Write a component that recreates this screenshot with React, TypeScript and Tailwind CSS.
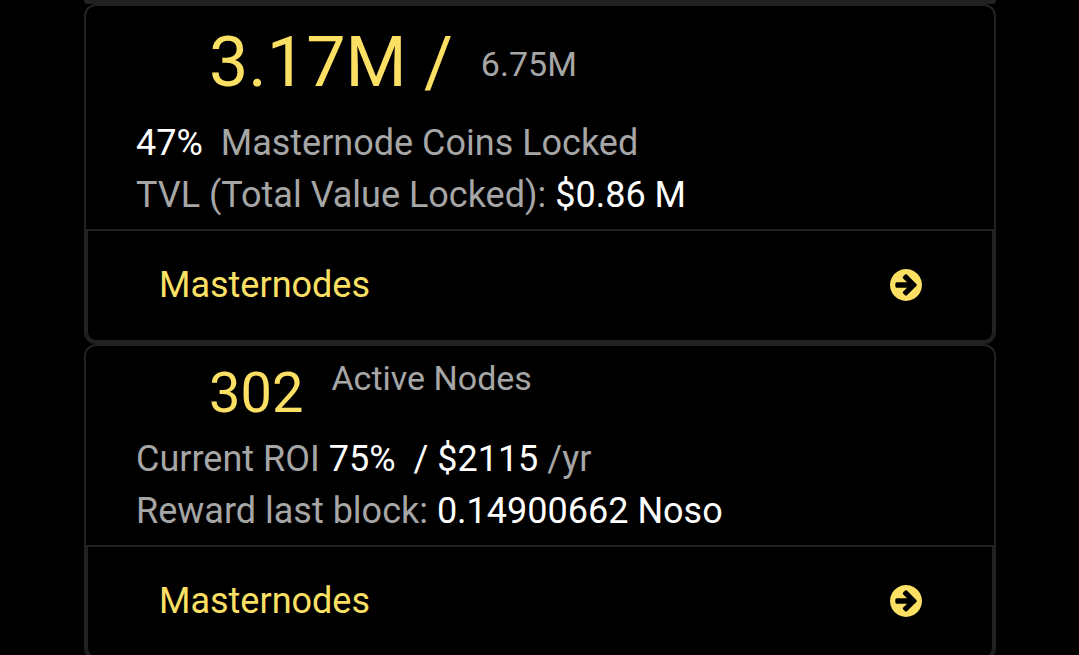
import type { ReactNode } from 'react';

interface StatCardProps {
  header: ReactNode;
  children: ReactNode;
}

function ArrowCircleIcon() {
  return (
    <svg viewBox="0 0 1536 1536" className="size-8 fill-current" aria-hidden="true">
      <path d="M1285 767q0-27-18-45l-91-91-362-362q-18-18-45-18t-45 18l-91 91q-18 18-18 45t18 45l189 189h-502q-26 0-45 19t-19 45v128q0 26 19 45t45 19h502l-189 189q-19 19-19 45t19 45l91 91q18 18 45 18t45-18l362-362 91-91q18-18 18-45zM1536 768q0 209-103 385.5t-279.5 279.5-385.5 103-385.5-103-279.5-279.5-103-385.5 103-385.5 279.5-279.5 385.5-103 385.5 103 279.5 279.5 103 385.5z" />
    </svg>
  );
}

// Stat panel: big figure, two detail lines and a link strip at the bottom.
function StatCard({ header, children }: StatCardProps) {
  return (
    <section className="rounded-[12px] border-2 border-[#222222]">
      {header}
      <div className="px-[50px] pb-2 text-[36px] leading-[52px] text-[#a6a6a6]">
        {children}
      </div>
      <a
        href="#masternodes"
        className="flex h-[113px] items-center justify-between rounded-b-[10px] border-2 border-[#222222] pr-[70px] pb-[2px] pl-[71px] text-[36px] text-[#fce063]"
      >
        Masternodes
        <ArrowCircleIcon />
      </a>
    </section>
  );
}

function Value({ children }: { children: ReactNode }) {
  return <span className="whitespace-pre text-white">{children}</span>;
}

export default function App() {
  return (
    <main className="h-screen overflow-hidden bg-black pr-[83px] pl-[84px] font-[Roboto,sans-serif]">
      {/* bottom edge of the panel above */}
      <div className="h-1 rounded-b-xl bg-[#222222]" />

      <StatCard
        header={
          <header className="flex h-[111px] items-center gap-7 pl-[123px]">
            <h2 className="text-[70px] leading-[82px] text-[#fce063]">3.17M /</h2>
            <span className="pt-1 text-[34px] leading-[40px] text-[#a6a6a6]">6.75M</span>
          </header>
        }
      >
        <p>
          <Value>47% </Value> Masternode Coins Locked
        </p>
        <p>
          TVL (Total Value Locked): <Value>$0.86 M</Value>
        </p>
      </StatCard>

      <StatCard
        header={
          <header className="flex h-[87px] items-start gap-7 pt-3 pl-[123px]">
            <h2 className="text-[56px] leading-[70px] text-[#fce063]">302</h2>
            <span className="text-[34px] leading-[40px] text-[#a6a6a6]">Active Nodes</span>
          </header>
        }
      >
        <p>
          Current ROI <Value>75%  / $2115</Value> /yr
        </p>
        <p>
          Reward last block: <Value>0.14900662 Noso</Value>
        </p>
      </StatCard>
    </main>
  );
}
